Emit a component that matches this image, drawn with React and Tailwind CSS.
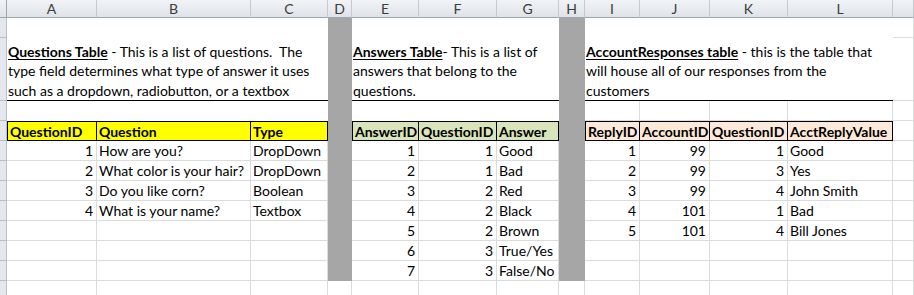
import React from "react";

const font = { fontFamily: "Lato, 'Liberation Sans', sans-serif" };

const letters = ["A", "B", "C", "D", "E", "F", "G", "H", "I", "J", "K", "L", ""];

const questions = [
  ["1", "How are you?", "DropDown"],
  ["2", "What color is your hair?", "DropDown"],
  ["3", "Do you like corn?", "Boolean"],
  ["4", "What is your name?", "Textbox"],
];

const answers = [
  ["1", "1", "Good"],
  ["2", "1", "Bad"],
  ["3", "2", "Red"],
  ["4", "2", "Black"],
  ["5", "2", "Brown"],
  ["6", "3", "True/Yes"],
  ["7", "3", "False/No"],
];

const replies = [
  ["1", "99", "1", "Good"],
  ["2", "99", "3", "Yes"],
  ["3", "99", "4", "John Smith"],
  ["4", "101", "1", "Bad"],
  ["5", "101", "4", "Bill Jones"],
];

// plain cell with excel gridlines
function Cell({ children, right, clean }) {
  return (
    <div
      className={`flex items-center overflow-hidden whitespace-nowrap text-[14px] text-black leading-none ${
        clean ? "" : "border-r border-b border-[#dadcdd]"
      } ${right ? "justify-end pr-[3px]" : "pl-[2px]"}`}
    >
      {children}
    </div>
  );
}

function Head({ children, color, first }) {
  return (
    <div
      className={`flex items-center pl-[2px] font-bold text-[14px] text-black whitespace-nowrap border-t border-r border-b border-black ${
        first ? "border-l" : ""
      } ${color}`}
    >
      {children}
    </div>
  );
}

function RowStrip() {
  return <div className="bg-[#e4e8ee] border-r border-b border-[#b7bfc8]" />;
}

function Title({ span, children }) {
  return (
    <div
      className={`${span} row-span-2 flex flex-col justify-end pl-[1px] pb-[0px] border-b border-black text-[14px] leading-[19.5px] text-black`}
    >
      {children}
    </div>
  );
}

export default function App() {
  const dataRows = [];
  for (let i = 0; i < 7; i++) {
    const q = questions[i];
    const a = answers[i];
    const r = replies[i];
    dataRows.push(
      <React.Fragment key={i}>
        <RowStrip />
        <Cell right>{q ? q[0] : ""}</Cell>
        <Cell>{q ? q[1] : ""}</Cell>
        <Cell>{q ? q[2] : ""}</Cell>
        <Cell right>{a[0]}</Cell>
        <Cell right>{a[1]}</Cell>
        <Cell>{a[2]}</Cell>
        <Cell right>{r ? r[0] : ""}</Cell>
        <Cell right>{r ? r[1] : ""}</Cell>
        <Cell right>{r ? r[2] : ""}</Cell>
        <Cell>{r ? r[3] : ""}</Cell>
        <Cell />
      </React.Fragment>
    );
  }

  return (
    <div className="w-[914px] h-[295px] overflow-hidden bg-white" style={font}>
      <div className="grid grid-cols-[7px_90px_154px_77px_24px_67px_78px_62px_26px_55px_70px_78px_105px_21px] grid-rows-[18px_20px_63px_20px_20px_20px_20px_20px_20px_20px_20px_20px_20px]">
        {/* column headers */}
        <div className="bg-gradient-to-b from-[#f1f3f6] to-[#dfe3e8] border-r border-b border-[#9ea6ae]" />
        {letters.map((l, i) => (
          <div
            key={i}
            className="flex items-center justify-center bg-gradient-to-b from-[#f1f3f6] to-[#dfe3e8] border-r border-b border-r-[#c5cad0] border-b-[#9ea6ae] text-[14px] text-[#3c3c3c]"
          >
            {l}
          </div>
        ))}

        {/* row 1 */}
        <RowStrip />
        <Title span="col-span-3">
          <div>
            <span className="font-bold underline underline-offset-2">Questions Table</span> - This is a list of questions.&nbsp; The
          </div>
          <div>type field determines what type of answer it uses</div>
          <div>such as a dropdown, radiobutton, or a textbox</div>
        </Title>
        <div className="row-span-11 bg-[#a6a6a6]" />
        <Title span="col-span-3">
          <div>
            <span className="font-bold underline underline-offset-2">Answers Table</span>- This is a list of
          </div>
          <div>answers that belong to the</div>
          <div>questions.</div>
        </Title>
        <div className="row-span-11 bg-[#a6a6a6]" />
        <Title span="col-span-4">
          <div>
            <span className="font-bold underline underline-offset-2">AccountResponses table</span> - this is the table that
          </div>
          <div>will house all of our responses from the</div>
          <div>customers</div>
        </Title>
        <Cell />

        {/* row 2 */}
        <RowStrip />
        <Cell />

        {/* row 3 */}
        <RowStrip />
        <Cell clean />
        <Cell clean />
        <Cell clean />
        <Cell clean />
        <Cell clean />
        <Cell clean />
        <Cell />
        <Cell />
        <Cell />
        <Cell />
        <Cell />

        {/* row 4: table headers */}
        <RowStrip />
        <Head color="bg-[#ffff00]" first>QuestionID</Head>
        <Head color="bg-[#ffff00]">Question</Head>
        <Head color="bg-[#ffff00]">Type</Head>
        <Head color="bg-[#d8e4bc]" first>AnswerID</Head>
        <Head color="bg-[#d8e4bc]">QuestionID</Head>
        <Head color="bg-[#d8e4bc]">Answer</Head>
        <Head color="bg-[#fde9d9]" first>ReplyID</Head>
        <Head color="bg-[#fde9d9]">AccountID</Head>
        <Head color="bg-[#fde9d9]">QuestionID</Head>
        <Head color="bg-[#fde9d9]">AcctReplyValue</Head>
        <Cell />

        {dataRows}

        {/* row 12 */}
        <RowStrip />
        {letters.map((l, i) => (
          <Cell key={i} />
        ))}
      </div>
    </div>
  );
}
